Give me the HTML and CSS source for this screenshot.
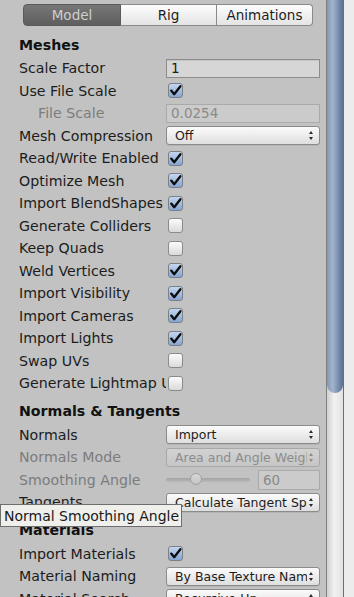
FILE: index.html
```html
<!DOCTYPE html>
<html lang="en">
<head>
    <meta charset="UTF-8">
    <meta name="viewport" content="width=device-width, initial-scale=1.0">
    <title>Model Import Settings</title>
    <link rel="stylesheet" href="styles.css">
</head>
<body>
    <div class="window">
        <div class="panel">
            <div class="tabs">
                <div class="tab active">Model</div>
                <div class="tab">Rig</div>
                <div class="tab">Animations</div>
            </div>

            <div class="section-title first">Meshes</div>
            <div class="row"><div class="label">Scale Factor</div><div class="field">1</div></div>
            <div class="row"><div class="label">Use File Scale</div><span class="check on"><svg viewBox="0 0 15 15"><path d="M3.2 7.6 L6.2 11.2 L12.4 3.2"/></svg></span></div>
            <div class="row disabled"><div class="label indent">File Scale</div><div class="field">0.0254</div></div>
            <div class="row"><div class="label">Mesh Compression</div><div class="popup"><span class="value">Off</span><span class="arrows"></span></div></div>
            <div class="row"><div class="label">Read/Write Enabled</div><span class="check on"><svg viewBox="0 0 15 15"><path d="M3.2 7.6 L6.2 11.2 L12.4 3.2"/></svg></span></div>
            <div class="row"><div class="label">Optimize Mesh</div><span class="check on"><svg viewBox="0 0 15 15"><path d="M3.2 7.6 L6.2 11.2 L12.4 3.2"/></svg></span></div>
            <div class="row"><div class="label">Import BlendShapes</div><span class="check on"><svg viewBox="0 0 15 15"><path d="M3.2 7.6 L6.2 11.2 L12.4 3.2"/></svg></span></div>
            <div class="row"><div class="label">Generate Colliders</div><span class="check"></span></div>
            <div class="row"><div class="label">Keep Quads</div><span class="check"></span></div>
            <div class="row"><div class="label">Weld Vertices</div><span class="check on"><svg viewBox="0 0 15 15"><path d="M3.2 7.6 L6.2 11.2 L12.4 3.2"/></svg></span></div>
            <div class="row"><div class="label">Import Visibility</div><span class="check on"><svg viewBox="0 0 15 15"><path d="M3.2 7.6 L6.2 11.2 L12.4 3.2"/></svg></span></div>
            <div class="row"><div class="label">Import Cameras</div><span class="check on"><svg viewBox="0 0 15 15"><path d="M3.2 7.6 L6.2 11.2 L12.4 3.2"/></svg></span></div>
            <div class="row"><div class="label">Import Lights</div><span class="check on"><svg viewBox="0 0 15 15"><path d="M3.2 7.6 L6.2 11.2 L12.4 3.2"/></svg></span></div>
            <div class="row"><div class="label">Swap UVs</div><span class="check"></span></div>
            <div class="row"><div class="label">Generate Lightmap UVs</div><span class="check"></span></div>

            <div class="section-title">Normals &amp; Tangents</div>
            <div class="row"><div class="label">Normals</div><div class="popup"><span class="value">Import</span><span class="arrows"></span></div></div>
            <div class="row disabled"><div class="label">Normals Mode</div><div class="popup"><span class="value">Area and Angle Weighted</span><span class="arrows"></span></div></div>
            <div class="row disabled">
                <div class="label">Smoothing Angle</div>
                <div class="slider">
                    <div class="track"><span class="knob"></span></div>
                    <div class="field number">60</div>
                </div>
            </div>
            <div class="row"><div class="label">Tangents</div><div class="popup"><span class="value">Calculate Tangent Space</span><span class="arrows"></span></div></div>

            <div class="section-title">Materials</div>
            <div class="row"><div class="label">Import Materials</div><span class="check on"><svg viewBox="0 0 15 15"><path d="M3.2 7.6 L6.2 11.2 L12.4 3.2"/></svg></span></div>
            <div class="row"><div class="label">Material Naming</div><div class="popup"><span class="value">By Base Texture Name</span><span class="arrows"></span></div></div>
            <div class="row"><div class="label">Material Search</div><div class="popup"><span class="value">Recursive-Up</span><span class="arrows"></span></div></div>

            <div class="tooltip">Normal Smoothing Angle</div>
        </div>
        <div class="scrollbar"><div class="thumb"></div></div>
        <div class="edge"></div>
    </div>
</body>
</html>
```

FILE: styles.css
```css
html, body {
    margin: 0;
    padding: 0;
    height: 100%;
    overflow: hidden;
}
body {
    font-family: "DejaVu Sans", sans-serif;
    font-size: 14.2px;
    color: #1c1c1c;
    background-color: #c2c2c2;
}
.window {
    display: flex;
    height: 597px;
}
.panel {
    position: relative;
    width: 326px;
    flex: none;
    padding-left: 19px;
    box-sizing: border-box;
    background-color: #c2c2c2;
}

/* tabs */
.tabs {
    display: flex;
    margin: 4px 0 0 4px;
    height: 22px;
    font-size: 13.5px;
}
.tab {
    width: 96px;
    box-sizing: border-box;
    display: flex;
    align-items: center;
    justify-content: center;
    border: 1px solid #8a8a8a;
    border-left: none;
    background: linear-gradient(#fdfdfd, #e4e4e4);
    color: #1e1e1e;
}
.tab:first-child {
    width: 98px;
    border-left: 1px solid #6a6a6a;
    border-radius: 4px 0 0 4px;
}
.tab:last-child {
    border-radius: 0 4px 4px 0;
}
.tab.active {
    background: linear-gradient(#777777, #5e5e5e);
    border-color: #5a5a5a;
    color: #cfcfcf;
}

/* sections */
.section-title {
    height: 25px;
    margin-top: 4px;
    display: flex;
    align-items: center;
    font-weight: bold;
    color: #111;
}
.section-title.first {
    margin-top: 6px;
}
.row {
    display: flex;
    align-items: center;
    height: 22.5px;
}
.label {
    width: 147px;
    flex: none;
    white-space: nowrap;
    overflow: hidden;
}
.label.indent {
    padding-left: 19px;
    box-sizing: border-box;
}
.row.disabled .label {
    color: #7c7c7c;
}

/* fields */
.field {
    width: 154px;
    height: 19px;
    box-sizing: border-box;
    padding-left: 4px;
    display: flex;
    align-items: center;
    font-size: 13.5px;
    border: 1px solid #8c8c8c;
    background-color: #d6d6d6;
    box-shadow: inset 0 1px 0 #c4c4c4;
}
.row.disabled .field {
    border-color: #aaaaaa;
    background-color: #cbcbcb;
    box-shadow: none;
    color: #8a8a8a;
}

.check {
    width: 15px;
    height: 15px;
    margin-left: 2px;
    box-sizing: border-box;
    border: 1px solid #8b8b8b;
    border-radius: 3px;
    background: linear-gradient(#fbfbfb, #dadada);
}
.check.on {
    border-color: #7a7f88;
    background: linear-gradient(#c4d6ef, #86a5d2);
}
.check svg {
    display: block;
    width: 15px;
    height: 15px;
    margin: -1px 0 0 -1px;
}
.check path {
    fill: none;
    stroke: #0c0c0c;
    stroke-width: 2.3;
    stroke-linecap: round;
    stroke-linejoin: round;
}

.popup {
    width: 154px;
    height: 19px;
    box-sizing: border-box;
    padding: 0 5px 0 8px;
    display: flex;
    align-items: center;
    font-size: 12.5px;
    border: 1px solid #8b8b8b;
    border-radius: 3px;
    background: linear-gradient(#fbfbfb, #dedede);
    box-shadow: 0 1px 0 #b4b4b4;
}
.popup .value {
    flex: 1;
    white-space: nowrap;
    overflow: hidden;
}
.popup .arrows {
    position: relative;
    width: 5px;
    height: 9px;
    margin-left: 2px;
}
.popup .arrows::before,
.popup .arrows::after {
    content: "";
    position: absolute;
    left: 0;
    border-left: 2.5px solid transparent;
    border-right: 2.5px solid transparent;
}
.popup .arrows::before {
    top: 0;
    border-bottom: 3.5px solid #2a2a2a;
}
.popup .arrows::after {
    bottom: 0;
    border-top: 3.5px solid #2a2a2a;
}
.row.disabled .popup {
    border-color: #a8a8a8;
    background: linear-gradient(#d2d2d2, #c6c6c6);
    box-shadow: none;
    color: #8c8c8c;
}
.row.disabled .popup .arrows::before {
    border-bottom-color: #8c8c8c;
}
.row.disabled .popup .arrows::after {
    border-top-color: #8c8c8c;
}

/* slider */
.slider {
    width: 154px;
    display: flex;
    align-items: center;
}
.track {
    position: relative;
    width: 84px;
    height: 4px;
    border-radius: 2px;
    background: linear-gradient(#a4a4a4, #b8b8b8);
    margin-right: 8px;
}
.knob {
    position: absolute;
    left: 24px;
    top: -5px;
    width: 12px;
    height: 12px;
    box-sizing: border-box;
    border-radius: 50%;
    border: 1px solid #a0a0a0;
    background: linear-gradient(#d8d8d8, #c4c4c4);
}
.field.number {
    width: 62px;
    height: 20px;
}

/* tooltip */
.tooltip {
    position: absolute;
    left: 0;
    top: 504px;
    height: 23px;
    width: 182px;
    box-sizing: border-box;
    padding-left: 3px;
    display: flex;
    align-items: center;
    white-space: nowrap;
    font-size: 14px;
    border: 1px solid #6e6e6e;
    background-color: #efefec;
    color: #1a1a1a;
}

/* scrollbar */
.scrollbar {
    width: 18px;
    flex: none;
    box-sizing: border-box;
    border-left: 1px solid #808080;
    border-right: 1px solid #6e6e6e;
    background: linear-gradient(to right, #cfcfcf, #f2f2f2 45%, #e2e2e2);
}
.thumb {
    height: 393px;
    border-radius: 0 0 8px 8px;
    background: linear-gradient(to right, #8296b4, #a3b4cd 35%, #7a8fb0 70%, #5a6e8f);
}
.edge {
    flex: 1;
    background-color: #ececec;
}
```
